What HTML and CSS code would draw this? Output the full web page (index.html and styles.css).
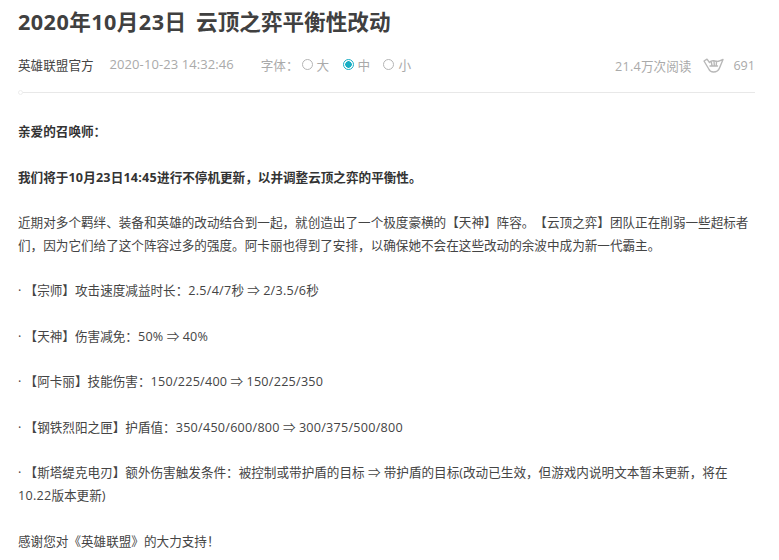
FILE: index.html
```
<!DOCTYPE html>
<html lang="zh-CN">
<head>
<meta charset="utf-8">
<title>2020年10月23日 云顶之弈平衡性改动</title>
<link rel="stylesheet" href="styles.css">
</head>
<body>
<article class="article">
  <h1 class="title"><span class="title-date">2020年10月23日</span> 云顶之弈平衡性改动</h1>
  <div class="meta">
    <div class="meta-left">
      <span class="author">英雄联盟官方</span>
      <span class="date">2020-10-23 14:32:46</span>
      <span class="font-label">字体：</span>
      <span class="opt"><i class="radio"></i>大</span>
      <span class="opt"><i class="radio on"></i>中</span>
      <span class="opt"><i class="radio"></i>小</span>
    </div>
    <div class="meta-right">
      <span class="reads"><span class="num">21.4</span>万次阅读</span>
      <svg class="hand" width="21" height="15" viewBox="0 0 21 15" fill="none" stroke="#b8b8b8" stroke-width="1.4" stroke-linejoin="round" stroke-linecap="round">
        <path d="M1 3 L4 1.2 L6.5 4.5 Q8 2.6 10.5 2.8 L13 3.2 Q15 3.6 16.5 2.8 L20 1.5 L16.5 10 Q15 14 10.5 14 Q7 14 5.8 11 Z"/>
        <path d="M8.3 4 L9 7.5 M11 3.2 L11.3 7.5 M13.6 3.4 L13.2 7.5 M7 8 L14.5 8"/>
      </svg>
      <span>691</span>
    </div>
  </div>
  <div class="content">
    <p class="strong">亲爱的召唤师：</p>
    <p class="strong">我们将于<span class="num">10</span>月<span class="num">23</span>日<span class="num">14:45</span>进行不停机更新，以并调整云顶之弈的平衡性。</p>
    <p>近期对多个羁绊、装备和英雄的改动结合到一起，就创造出了一个极度豪横的【天神】阵容。【云顶之弈】团队正在削弱一些超标者们，因为它们给了这个阵容过多的强度。阿卡丽也得到了安排，以确保她不会在这些改动的余波中成为新一代霸主。</p>
    <p>· 【宗师】攻击速度减益时长：<span class="num">2.5/4/7</span>秒 ⇒ <span class="num">2/3.5/6</span>秒</p>
    <p>· 【天神】伤害减免：<span class="num">50%</span> ⇒ <span class="num">40%</span></p>
    <p>· 【阿卡丽】技能伤害：<span class="num">150/225/400</span> ⇒ <span class="num">150/225/350</span></p>
    <p>· 【钢铁烈阳之匣】护盾值：<span class="num">350/450/600/800</span> ⇒ <span class="num">300/375/500/800</span></p>
    <p>· 【斯塔缇克电刃】额外伤害触发条件：被控制或带护盾的目标 ⇒ 带护盾的目标(改动已生效，但游戏内说明文本暂未更新，将在<span class="num">10.22</span>版本更新)</p>
    <p>感谢您对《英雄联盟》的大力支持！</p>
  </div>
</article>
</body>
</html>
```
FILE: styles.css
```
html, body {
  margin: 0;
  padding: 0;
  background: #fff;
  overflow: hidden;
}
body {
  height: 560px;
  font-family: "Open Sans", "Noto Sans CJK SC", sans-serif;
  color: #444;
  text-spacing-trim: space-all;
}
.article {
  margin: 0 24px 0 18px;
}
.title {
  margin: 0;
  padding-top: 5px;
  font-size: 21.6px;
  line-height: 34px;
  font-weight: 700;
  color: #404040;
  word-spacing: 4px;
}
.title-date {
  letter-spacing: 0.45px;
}
.num {
  letter-spacing: 0.25px;
}
.meta {
  position: relative;
  display: flex;
  justify-content: space-between;
  align-items: center;
  height: 53px;
  border-bottom: 1px solid #e8e8e8;
  font-size: 12.6px;
  color: #aaa;
}
.meta::before {
  content: "";
  position: absolute;
  left: 0;
  bottom: -3px;
  box-sizing: border-box;
  width: 5px;
  height: 5px;
  border: 1px solid #eee;
  border-radius: 50%;
  background: #fff;
}
.meta-left, .meta-right {
  display: flex;
  align-items: center;
}
.meta-left {
  padding-bottom: 3px;
}
.author {
  color: #444;
  margin-right: 16px;
}
.date {
  font-size: 13px;
  letter-spacing: 0.08px;
  margin-right: 27px;
}
.font-label {
  margin-right: 3px;
}
.opt {
  display: flex;
  align-items: center;
  margin-right: 13.4px;
}
.radio {
  display: block;
  box-sizing: border-box;
  width: 11px;
  height: 11px;
  margin-right: 4px;
  border: 1px solid #b5b5b5;
  border-radius: 50%;
}
.radio.on {
  border-color: #18aec4;
  background: radial-gradient(circle, #18aec4 0 3px, #fff 3.5px);
}
.reads {
  margin-right: 12px;
}
.hand {
  margin-right: 9px;
}
.content {
  padding-top: 28px;
  font-size: 12.6px;
  line-height: 22.75px;
  color: #444;
}
.content p {
  margin: 0 0 22.75px;
}
.strong {
  font-weight: 700;
  color: #333;
}
```
